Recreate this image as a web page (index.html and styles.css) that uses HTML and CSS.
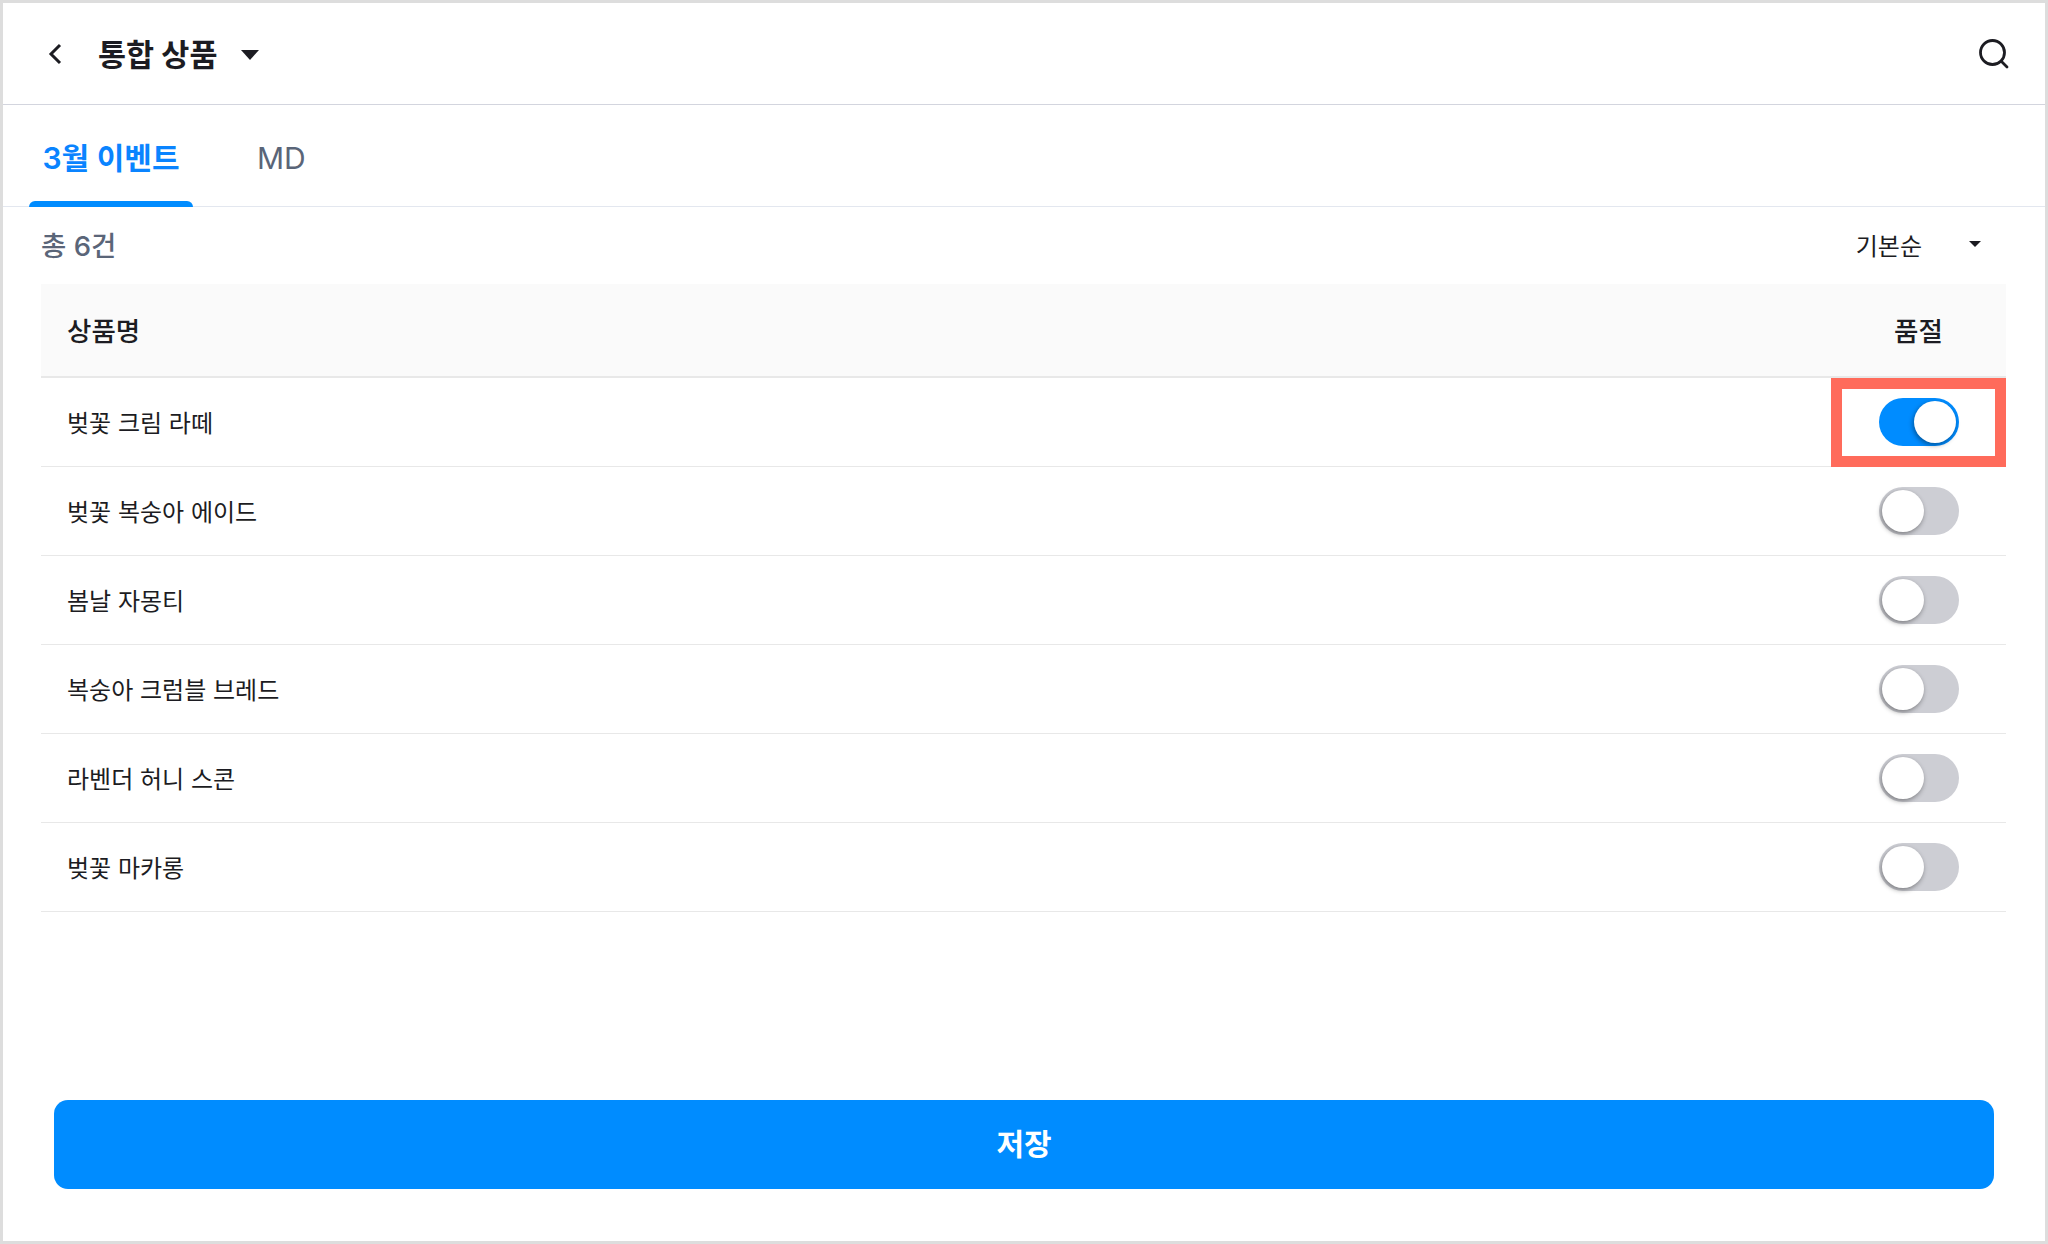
FILE: index.html
```html
<!DOCTYPE html>
<html lang="ko">
<head>
    <meta charset="UTF-8">
    <meta name="viewport" content="width=device-width, initial-scale=1.0">
    <title>통합 상품</title>
    <link rel="stylesheet" href="styles.css">
</head>
<body>
    <div class="frame">
        <div class="header">
            <div class="header-left">
                <svg class="icon-back" width="16" height="24" viewBox="0 0 16 24"><path d="M14 4 L5 13 L14 22" fill="none" stroke="#1c1c22" stroke-width="3"/></svg>
                <h1>통합 상품</h1>
                <span class="caret caret-large"></span>
            </div>
            <svg class="icon-search" width="32" height="32" viewBox="0 0 32 32"><circle cx="14.5" cy="14.5" r="12" fill="none" stroke="#1c1c22" stroke-width="2.8"/><path d="M23.5 23.5 L29 29" fill="none" stroke="#1c1c22" stroke-width="2.8" stroke-linecap="round"/></svg>
        </div>

        <div class="tabs">
            <div class="tab active">3월 이벤트</div>
            <div class="tab">MD</div>
        </div>

        <div class="list-top">
            <div class="total">총 6건</div>
            <div class="sort">기본순 <span class="caret caret-small"></span></div>
        </div>

        <div class="table">
            <div class="row table-head">
                <div class="name">상품명</div>
                <div class="soldout">품절</div>
            </div>
            <div class="row">
                <div class="name">벚꽃 크림 라떼</div>
                <div class="soldout highlight"><span class="toggle on"></span></div>
            </div>
            <div class="row">
                <div class="name">벚꽃 복숭아 에이드</div>
                <div class="soldout"><span class="toggle"></span></div>
            </div>
            <div class="row">
                <div class="name">봄날 자몽티</div>
                <div class="soldout"><span class="toggle"></span></div>
            </div>
            <div class="row">
                <div class="name">복숭아 크럼블 브레드</div>
                <div class="soldout"><span class="toggle"></span></div>
            </div>
            <div class="row">
                <div class="name">라벤더 허니 스콘</div>
                <div class="soldout"><span class="toggle"></span></div>
            </div>
            <div class="row">
                <div class="name">벚꽃 마카롱</div>
                <div class="soldout"><span class="toggle"></span></div>
            </div>
        </div>

        <button class="btn-save">저장</button>
    </div>
</body>
</html>
```

FILE: styles.css
```css
*, *::before, *::after {
    box-sizing: border-box;
}

html, body {
    margin: 0;
    padding: 0;
}

body {
    font-family: Inter, 'Noto Sans CJK KR', sans-serif;
    background: white;
    color: #1c1c22;
}

.frame {
    position: relative;
    display: flex;
    flex-direction: column;
    width: 2048px;
    height: 1244px;
    border: 3px solid #dddddd;
    background: white;
}

.header {
    display: flex;
    align-items: center;
    justify-content: space-between;
    height: 102px;
    padding: 0 35px 2px 43px;
    border-bottom: 1px solid #d3d5de;
}

.header-left {
    display: flex;
    align-items: center;
}

.header h1 {
    margin: 0 0 0 36px;
    font-size: 30.5px;
    font-weight: 700;
}

.icon-search {
    margin-top: 3px;
}

.caret {
    display: inline-block;
    width: 0;
    height: 0;
    border-style: solid;
    border-color: #1c1c22 transparent transparent transparent;
}

.caret-large {
    margin-left: 24px;
    margin-top: 4px;
    border-width: 10px 9.5px 0 9.5px;
}

.caret-small {
    margin-left: 47px;
    margin-bottom: 2px;
    border-width: 6px 6.5px 0 6.5px;
}

.tabs {
    display: flex;
    height: 102px;
    padding-left: 26px;
    border-bottom: 1px solid #e3e7ef;
}

.tab {
    position: relative;
    display: flex;
    align-items: center;
    justify-content: center;
    height: 102px;
    padding: 4px 14px 0;
    margin-right: 50px;
    font-size: 30px;
    color: #5a6578;
}

.tab.active {
    width: 164px;
    padding: 0;
    font-weight: 600;
    color: #0a84ff;
}

.tab.active::after {
    content: "";
    position: absolute;
    left: 0;
    right: 0;
    bottom: 0;
    height: 6px;
    border-radius: 6px 6px 0 0;
    background: #008cff;
}

.list-top {
    display: flex;
    align-items: center;
    justify-content: space-between;
    height: 77px;
    padding: 0 64px 2px 38px;
}

.total {
    padding-bottom: 2px;
    font-size: 27.5px;
    font-weight: 500;
    color: #5a6578;
}

.sort {
    display: flex;
    align-items: center;
    font-size: 24px;
}

.table {
    margin: 0 39px 0 38px;
}

.row {
    display: flex;
    align-items: center;
    justify-content: space-between;
    height: 89px;
    padding-left: 26px;
    border-bottom: 1px solid #e8e8e8;
    font-size: 24px;
}

.name {
    padding-bottom: 2px;
}

.table-head {
    height: 94px;
    background: #fafafa;
    border-bottom: 2px solid #e8e8e8;
    font-size: 26.5px;
    font-weight: 500;
}

.table-head .soldout {
    padding-bottom: 2px;
}

.soldout {
    position: relative;
    display: flex;
    justify-content: center;
    width: 175px;
}

.toggle {
    position: relative;
    display: block;
    width: 80px;
    height: 48px;
    border-radius: 24px;
    background: #cdced4;
}

.toggle::after {
    content: "";
    position: absolute;
    top: 3px;
    left: 3px;
    width: 42px;
    height: 42px;
    border-radius: 50%;
    background: white;
    box-shadow: -1px 2px 5px rgba(0,0,0,0.4);
}

.toggle.on {
    background: #008cff;
}

.toggle.on::after {
    left: 35px;
}

.highlight::before {
    content: "";
    position: absolute;
    top: -20px;
    left: 0;
    width: 175px;
    height: 89px;
    border: 11px solid #ff6b5b;
}

.btn-save {
    position: absolute;
    left: 51px;
    right: 51px;
    top: 1097px;
    height: 89px;
    padding: 0 0 6px;
    border: none;
    border-radius: 14px;
    background: #008cff;
    color: white;
    font-family: inherit;
    font-size: 30px;
    font-weight: 600;
}
```
